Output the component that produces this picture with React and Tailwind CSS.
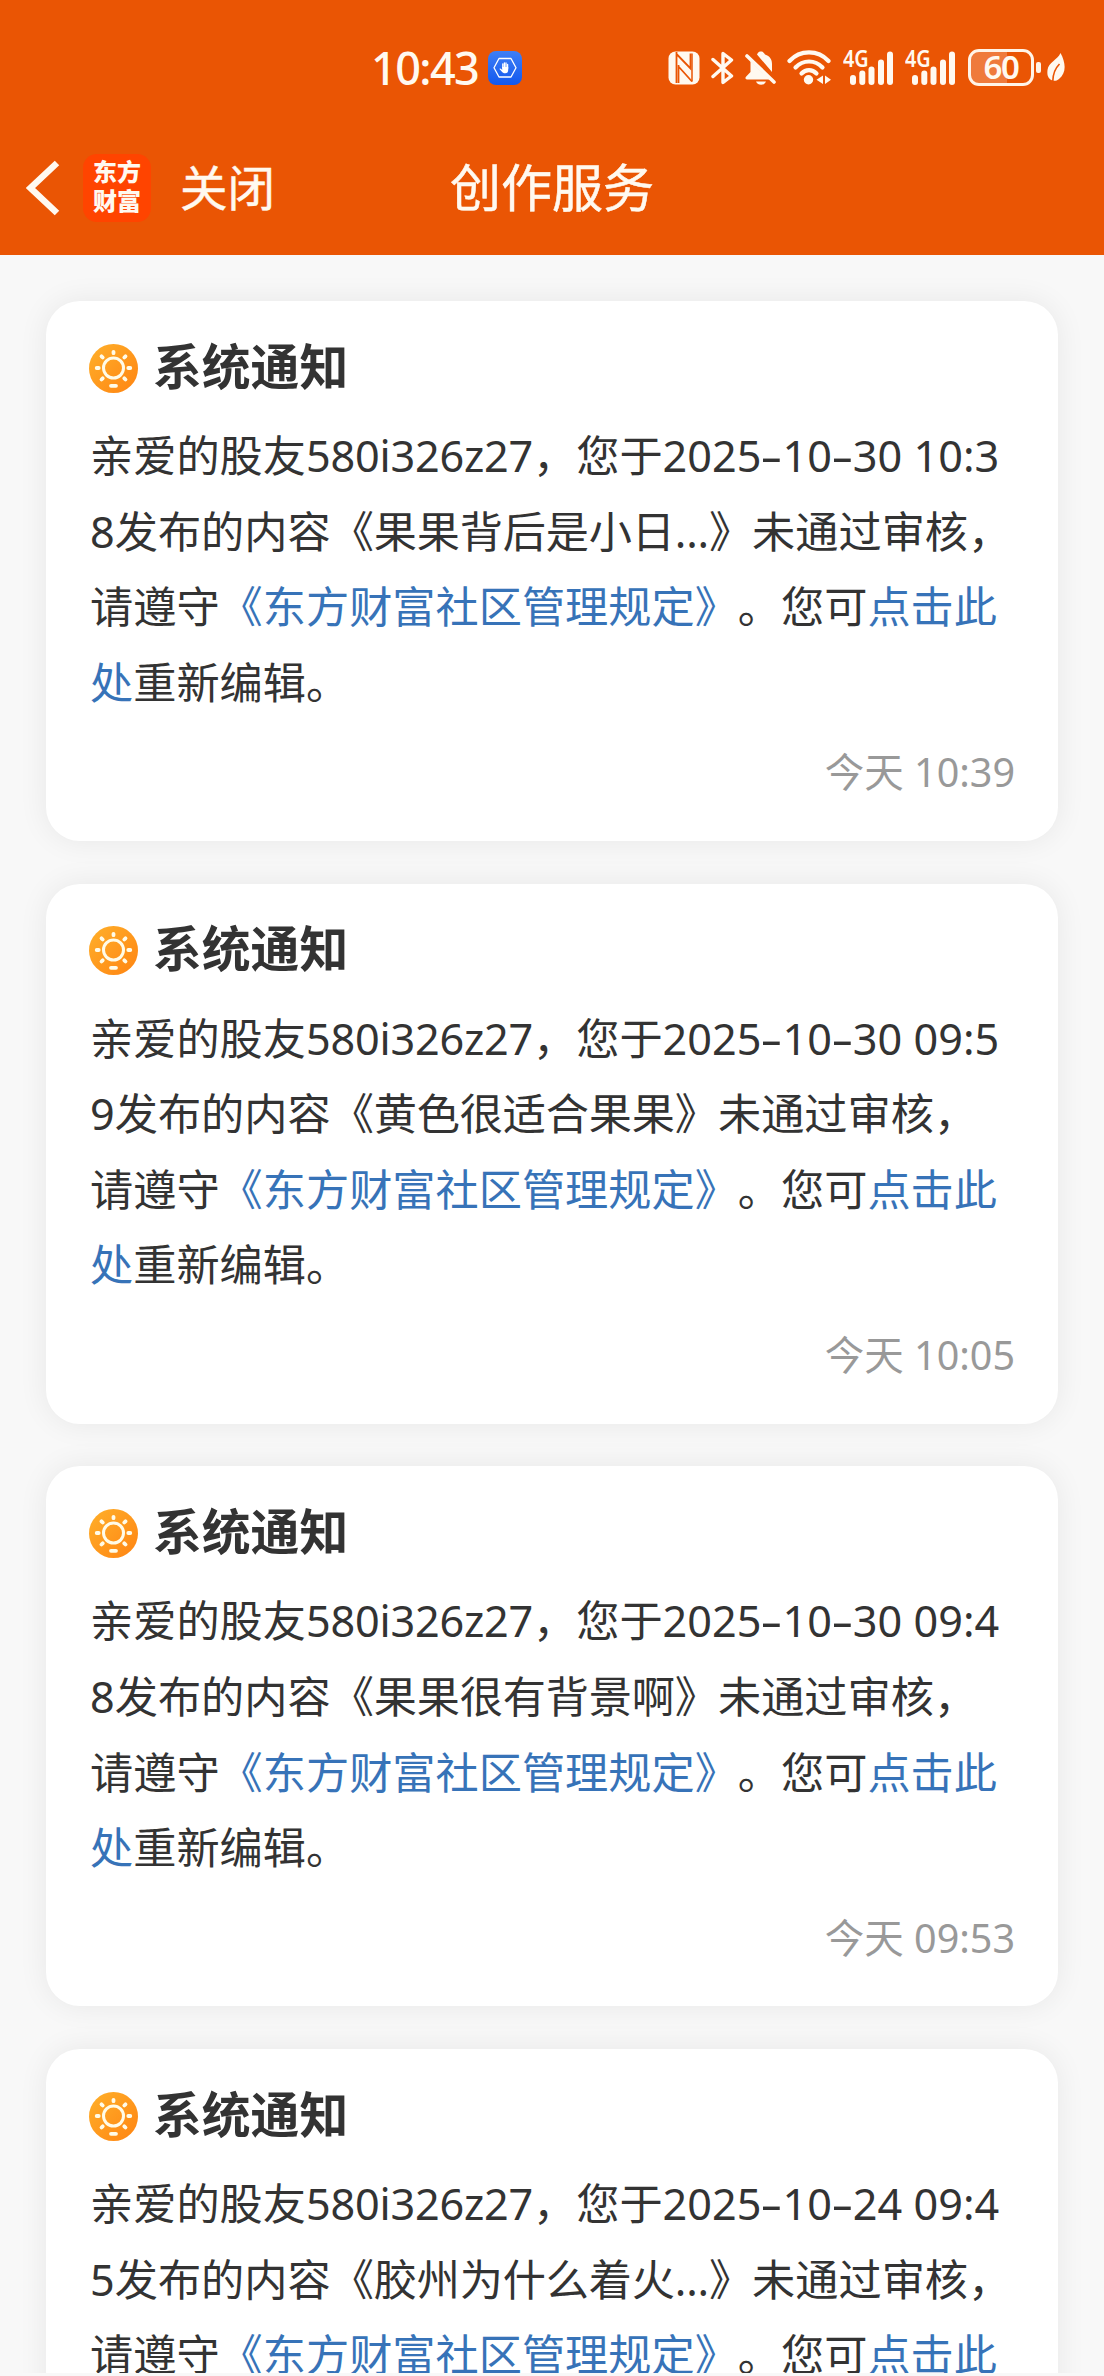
const notices = [
  { id: 1, date: ["2025", "10", "30 10:3"], rest: "8", post: "果果背后是小日...", time: "今天 10:39" },
  { id: 2, date: ["2025", "10", "30 09:5"], rest: "9", post: "黄色很适合果果", time: "今天 10:05" },
  { id: 3, date: ["2025", "10", "30 09:4"], rest: "8", post: "果果很有背景啊", time: "今天 09:53" },
  { id: 4, date: ["2025", "10", "24 09:4"], rest: "5", post: "胶州为什么着火...", time: "" },
];

function GuardIcon() {
  return (
    <svg className="ml-[13px] h-[34px] w-[34px]" viewBox="0 0 34 34">
      <defs>
        <linearGradient id="guard" x1="0" y1="0" x2="0" y2="1">
          <stop offset="0" stopColor="#3f7ff6" />
          <stop offset="1" stopColor="#1258ee" />
        </linearGradient>
      </defs>
      <rect width="34" height="34" rx="8" fill="url(#guard)" />
      <path d="M11 7.500h12l5 9.200-5 9.300H11l-5-9.300z" fill="none" stroke="#fff" strokeWidth="1.300" strokeLinejoin="round" />
      <path
        d="M14.800 13v4M16.400 12v5M18 12v5M19.600 13.500v4"
        stroke="#fff"
        strokeWidth="1.300"
        strokeLinecap="round"
      />
      <path d="M14.200 16h6v3c0 2-1 3.300-3 3.300-1.700 0-2.600-.6-3.500-1.800L11.500 18c.4-.7 1.200-.6 1.700 0l1 .9z" fill="#fff" />
    </svg>
  );
}

function NfcIcon() {
  return (
    <svg className="h-[34px] w-[32px]" viewBox="0 0 32 34">
      <rect x="0.500" y="0.500" width="31" height="33" rx="7" fill="#fff9f0" />
      <path d="M8.500 1v31M8.500 3l14 14.500V2.500" fill="none" stroke="#ea5504" strokeWidth="1.800" />
      <path d="M10.500 14v18M10.500 15.500L24 30.500" fill="none" stroke="#ea5504" strokeWidth="1.800" />
      <path d="M24 2.500v28" fill="none" stroke="#ea5504" strokeWidth="1.500" />
    </svg>
  );
}

function BluetoothIcon() {
  return (
    <svg className="ml-[11px] h-[34px] w-[23px]" viewBox="0 0 23 34">
      <path
        d="M2 8.500l18.500 16.500-8.500 6.500V2.500L20.500 9 2 25.500"
        fill="none"
        stroke="#fff9f0"
        strokeWidth="3.400"
        strokeLinecap="round"
        strokeLinejoin="round"
      />
    </svg>
  );
}

function MutedBellIcon() {
  return (
    <svg className="ml-[11px] h-[34px] w-[31px]" viewBox="0 0 31 34">
      <path d="M12 3.500C13 1 14.500.5 16 .5s3 .8 4 3c5 1.500 7 5 7 9.500v8z" fill="#fff9f0" />
      <path d="M5.500 10l19 18.500H2c-1.800 0-2-2-.8-3l4.300-4.500z" fill="#fff9f0" />
      <path d="M11 30.500h10c-1 2.300-2.800 3.300-5 3.300s-4-1-5-3.300z" fill="#fff9f0" />
      <path d="M2 5l27 26" stroke="#fff9f0" strokeWidth="3.600" strokeLinecap="round" />
    </svg>
  );
}

function WifiIcon() {
  return (
    <svg className="ml-[11px] h-[35px] w-[44px]" viewBox="0 0 44 35">
      <g fill="none" stroke="#fff9f0" strokeWidth="4.200" strokeLinecap="round">
        <path d="M2.500 11C13-.5 31-.5 41.500 11" />
        <path d="M8.500 17.500c7.500-8 19.500-8 27 0" />
        <path d="M14.500 23.500c4.300-4.500 10.700-4.500 15 0" />
      </g>
      <circle cx="21.500" cy="29.800" r="4.700" fill="#fff9f0" />
      <path d="M36 25.500v8.500l-6.500-4.200zM38 25.500v8.500l6-4.200z" fill="#fff9f0" />
    </svg>
  );
}

function Signal({ className }) {
  return (
    <div className={`relative h-[34px] w-[50px] ${className}`}>
      <svg className="h-[34px] w-[50px]" viewBox="0 0 50 34" fill="#fff9f0">
        <rect x="7" y="24" width="6" height="10" rx="3" />
        <rect x="16.300" y="19.500" width="6" height="14.500" rx="3" />
        <rect x="25.500" y="15.500" width="6" height="18.500" rx="3" />
        <rect x="35" y="8.500" width="6" height="25.500" rx="3" />
        <rect x="44" y="0.500" width="6" height="33.500" rx="3" />
      </svg>
      <span className="absolute left-0 -top-[5px] origin-left scale-x-[0.86] text-[23px] font-semibold leading-[24px]">
        4G
      </span>
    </div>
  );
}

function Battery() {
  return (
    <div className="ml-[13px] flex items-center">
      <div className="flex h-[37px] w-[66px] items-center justify-center rounded-[11px] border-[3px] border-[#fff4e8] bg-linear-to-r from-[#ef7a3b] from-60% to-transparent to-60%">
        <span className="pb-[3px] text-[33px] font-semibold leading-none tracking-[-1.500px]">60</span>
      </div>
      <div className="ml-[2px] h-[11px] w-[5px] rounded-[2px] bg-[#fff4e8]" />
      <svg className="ml-[6px] h-[29px] w-[18px]" viewBox="0 0 18 29">
        <path d="M13.500 0c5.500 10 6 20-1.500 26-1.700 1.500-3.500 2-5.500 1.800C.5 26 0 21.500.5 17 1.500 9 10.500 7 13.500 0z" fill="#fff9f0" />
        <path d="M12.500 11C8 15.500 6 21 5.800 28" fill="none" stroke="#ea5504" strokeWidth="1.600" />
      </svg>
    </div>
  );
}

function StatusBar() {
  return (
    <div className="flex h-[120px] items-center justify-between pl-[371px] pr-[39px] pt-[15px]">
      <div className="flex items-center">
        <span className="w-[104px] whitespace-nowrap text-[45px] font-medium leading-none tracking-[-1.600px]">10:43</span>
        <GuardIcon />
      </div>
      <div className="flex items-center">
        <NfcIcon />
        <BluetoothIcon />
        <MutedBellIcon />
        <WifiIcon />
        <Signal className="ml-[12px]" />
        <Signal className="ml-[12px]" />
        <Battery />
      </div>
    </div>
  );
}

function NavBar() {
  return (
    <div className="grid h-[135px] grid-cols-[1fr_auto_1fr] items-center">
      <div className="flex items-center pl-[26px]">
        <svg className="h-[56px] w-[34px]" viewBox="0 0 34 56">
          <path d="M31 3L4.500 28 31 53" fill="none" stroke="#fff9f0" strokeWidth="6.500" />
        </svg>
        <div className="ml-[23px] flex h-[68px] w-[68px] flex-col items-center justify-center rounded-[14px] bg-[#ff4400] pb-[3px] text-[24px] font-black leading-[29px]">
          <span>东方</span>
          <span>财富</span>
        </div>
        <span className="ml-[29px] text-[47.500px] leading-none [-webkit-text-stroke:0.500px]">关闭</span>
      </div>
      <h1 className="text-[51px] leading-none [-webkit-text-stroke:0.500px]">创作服务</h1>
      <div />
    </div>
  );
}

function BulbIcon() {
  return (
    <svg className="h-[49px] w-[49px]" viewBox="0 0 49 49">
      <defs>
        <linearGradient id="bulb" x1="0" y1="0" x2="1" y2="1">
          <stop offset="0" stopColor="#ffb02a" />
          <stop offset="1" stopColor="#ff8412" />
        </linearGradient>
      </defs>
      <circle cx="24.500" cy="24.500" r="24.500" fill="url(#bulb)" />
      <circle cx="24.500" cy="24" r="10" fill="none" stroke="#fffbe8" strokeWidth="3" />
      <g stroke="#fffbe8" strokeWidth="3.800" strokeLinecap="round">
        <path d="M24.500 7.800v1.400M7.700 24h2M39.300 24h2M12.500 12.300l1.200 1.200M36.500 12.300l-1.200 1.200M12.500 35.500l1.200-1.200M36.500 35.500l-1.200-1.200M22 41.800h5" />
      </g>
    </svg>
  );
}

function Dash() {
  return <span className="inline-block w-[21px] scale-x-[1.600] text-center">-</span>;
}

function NoticeCard({ notice }) {
  const [year, month, dayTime] = notice.date;

  return (
    <article className="h-[540px] shrink-0 rounded-[34px] bg-white px-[44px] pt-[40px] shadow-[0_0_30px_rgba(0,0,0,0.07)]">
      <div className="-ml-px flex h-[54px] items-center">
        <BulbIcon />
        <h2 className="ml-[15px] pb-[4px] text-[48.800px] font-bold leading-none">系统通知</h2>
      </div>
      <div className="mt-[23px] whitespace-nowrap text-[43.200px] leading-[75.600px]">
        <p>
          亲爱的股友<span className="tracking-[-0.200px]">580i326z27</span>，您于{year}
          <Dash />
          {month}
          <Dash />
          {dayTime}
        </p>
        <p>
          {notice.rest}发布的内容《<span className="tracking-[-0.200px]">{notice.post}</span>》未通过审核，
        </p>
        <p>
          请遵守<a className="text-[#3773b8]">《东方财富社区管理规定》</a>。您可<a className="text-[#3773b8]">点击此</a>
        </p>
        <p>
          <a className="text-[#3773b8]">处</a>重新编辑。
        </p>
      </div>
      <p className="-mr-px mt-[24px] text-right text-[39.500px] leading-[56px] text-[#999999]">{notice.time}</p>
    </article>
  );
}

export default function App() {
  return (
    <div
      lang="zh-CN"
      className="h-[2376px] w-[1104px] overflow-hidden bg-[#f8f8f8] font-['Noto_Sans','Noto_Sans_CJK_SC',sans-serif] text-[#333333] [text-spacing-trim:space-all]"
    >
      <header className="h-[255px] bg-[#ea5504] text-[#fff9f0]">
        <StatusBar />
        <NavBar />
      </header>
      <main className="flex h-[2118px] flex-col gap-[42.700px] overflow-hidden px-[46px] pt-[46px]">
        {notices.map((notice) => (
          <NoticeCard key={notice.id} notice={notice} />
        ))}
      </main>
    </div>
  );
}
